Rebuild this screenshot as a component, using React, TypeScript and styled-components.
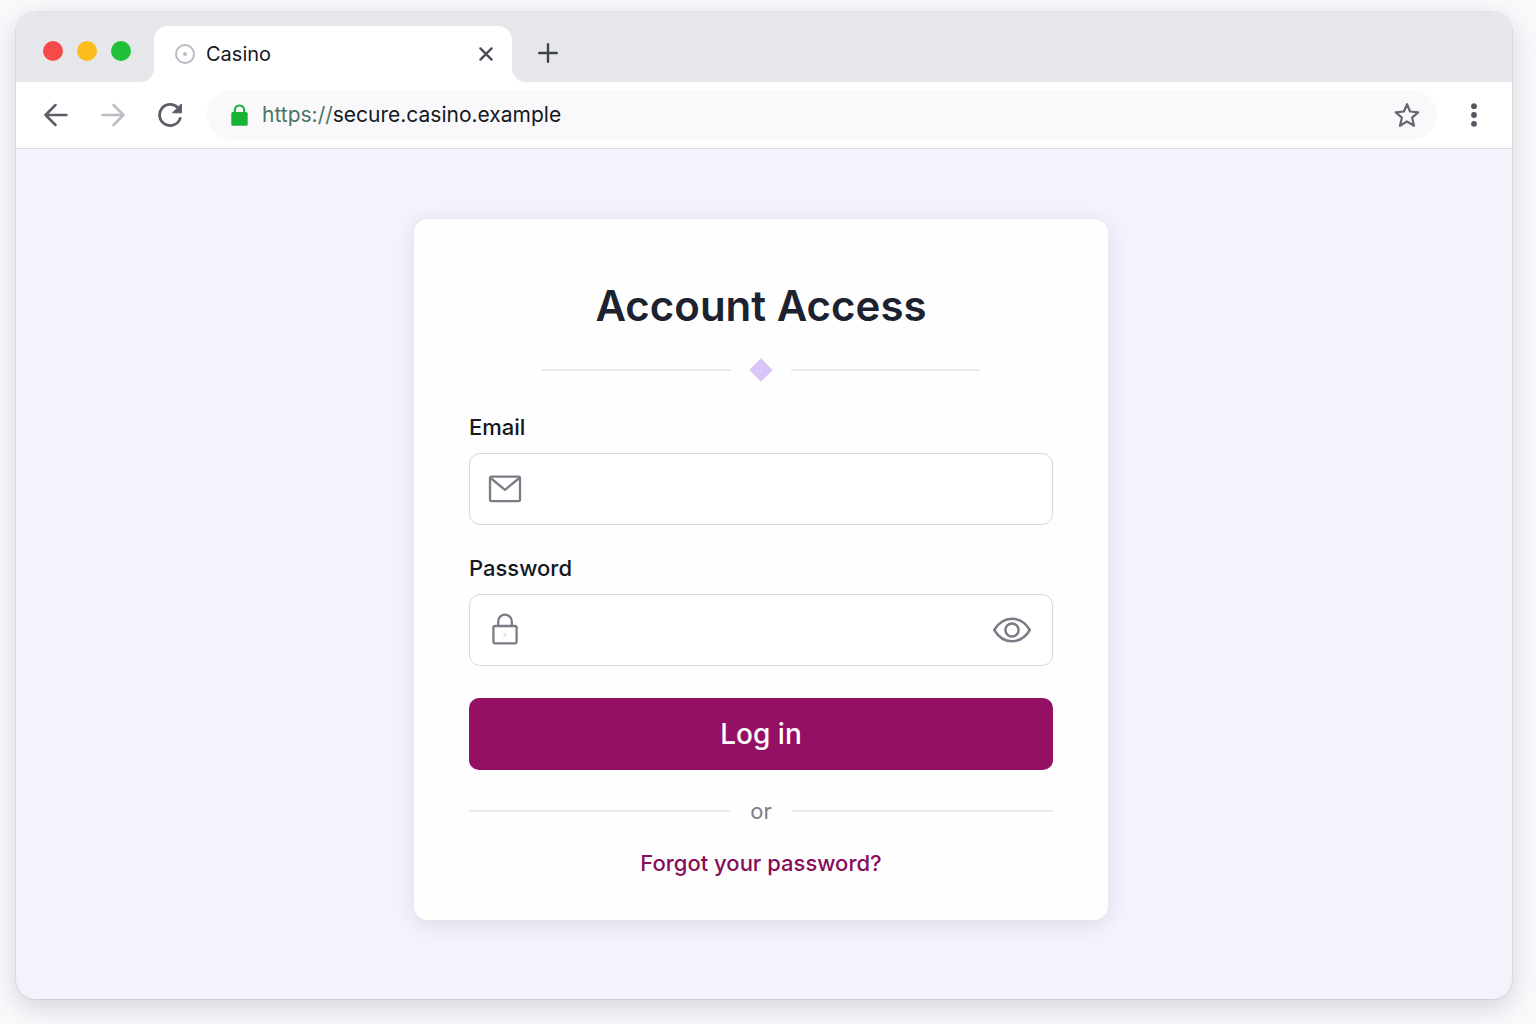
import React, { useState } from "react";
import styled, { createGlobalStyle } from "styled-components";

const GlobalStyle = createGlobalStyle`
  *, *::before, *::after { box-sizing: border-box; }
  body {
    margin: 0;
    background: #f9f9fc;
    color: #15181f;
    font-family: Inter, "Liberation Sans", sans-serif;
    -webkit-font-smoothing: antialiased;
  }
`;

const Desktop = styled.div`
  display: flex;
  min-height: 100vh;
  padding: 12px 24px 25px 16px;
`;

const BrowserWindow = styled.div`
  flex: 1;
  min-width: 0;
  display: flex;
  flex-direction: column;
  overflow: hidden;
  border-radius: 20px;
  background: #f5f2fc;
  box-shadow: 0 0 0 1px rgba(40, 40, 60, 0.08), 0 8px 24px rgba(30, 30, 50, 0.17);
`;

const TabStrip = styled.div`
  display: flex;
  height: 70px;
  background: #ffffff;
`;

const WindowControls = styled.div`
  display: flex;
  align-items: center;
  gap: 14px;
  width: 138px;
  padding: 8px 0 0 27px;
  background: #e6e7eb;
  border-bottom-right-radius: 14px;
`;

const WindowDot = styled.button<{ $color: string }>`
  width: 20px;
  height: 20px;
  padding: 0;
  border: 0;
  border-radius: 50%;
  background: ${(p) => p.$color};
`;

const TabSlot = styled.div`
  display: flex;
  width: 358px;
  padding-top: 14px;
  background: #e6e7eb;
`;

const Tab = styled.div`
  flex: 1;
  display: flex;
  align-items: center;
  gap: 10px;
  padding: 0 12px 0 20px;
  border-radius: 14px 14px 0 0;
  background: #ffffff;
`;

const TabTitle = styled.span`
  flex: 1;
  font-size: 20px;
  line-height: 28px;
`;

const StripRest = styled.div`
  flex: 1;
  display: flex;
  align-items: center;
  padding: 12px 0 0 20px;
  background: #e6e7eb;
  border-bottom-left-radius: 14px;
`;

const IconButton = styled.button<{ $size?: number }>`
  display: flex;
  flex: none;
  align-items: center;
  justify-content: center;
  width: ${(p) => p.$size ?? 40}px;
  height: ${(p) => p.$size ?? 40}px;
  padding: 0;
  border: 0;
  background: transparent;
`;

const Toolbar = styled.div`
  display: flex;
  align-items: center;
  gap: 17px;
  height: 67px;
  padding: 0 18px 0 20px;
  background: #ffffff;
  border-bottom: 1px solid #dcdbe3;
`;

const AddressBar = styled.div`
  flex: 1;
  display: flex;
  align-items: center;
  height: 50px;
  padding: 0 10px 0 24px;
  border-radius: 25px;
  background: #f9f9fb;
`;

const Address = styled.span`
  flex: 1;
  margin-left: 14px;
  font-size: 21px;
  line-height: 28px;
`;

const Scheme = styled.span`
  color: #4a7564;
`;

const Page = styled.main`
  flex: 1;
  display: flex;
  align-items: flex-start;
  justify-content: center;
  padding: 70px 30px 78px 24px;
`;

const Card = styled.form`
  display: flex;
  flex-direction: column;
  width: 100%;
  max-width: 694px;
  padding: 59px 55px 43px;
  border-radius: 14px;
  background: #fefefe;
  box-shadow: 0 4px 20px rgba(60, 50, 100, 0.12);
`;

const Title = styled.h1`
  margin: 0;
  color: #1c2230;
  font-size: 42px;
  font-weight: 600;
  line-height: 56px;
  text-align: center;
`;

const Divider = styled.div<{ $inset?: number; $gap: number; $top: number }>`
  display: flex;
  align-items: center;
  gap: ${(p) => p.$gap}px;
  margin-top: ${(p) => p.$top}px;
  padding: 0 ${(p) => p.$inset ?? 0}px;
  color: #7c7f87;
  font-size: 22px;
  line-height: 28px;

  &::before,
  &::after {
    content: "";
    flex: 1;
    height: 2px;
    background: #e9e9ee;
  }
`;

const Label = styled.label<{ $top: number }>`
  margin: ${(p) => p.$top}px 0 12px;
  font-size: 22px;
  font-weight: 500;
  line-height: 28px;
`;

const Field = styled.div`
  display: flex;
  align-items: center;
  height: 72px;
  padding: 0 20px 0 18px;
  border: 1px solid #d7d8dd;
  border-radius: 11px;
  background: #ffffff;
`;

const Input = styled.input`
  flex: 1;
  min-width: 0;
  height: 100%;
  margin: 0 16px;
  padding: 0;
  border: 0;
  outline: 0;
  background: transparent;
  color: inherit;
  font: inherit;
  font-size: 22px;
`;

const SubmitButton = styled.button`
  height: 72px;
  margin-top: 32px;
  border: 0;
  border-radius: 10px;
  background: #941065;
  color: #ffffff;
  font-family: inherit;
  font-size: 28px;
  font-weight: 500;
  line-height: 36px;
`;

const ForgotLink = styled.a`
  align-self: center;
  margin-top: 24px;
  color: #860d5a;
  font-size: 22px;
  font-weight: 500;
  line-height: 28px;
  text-decoration: none;
`;

const SiteIcon = () => (
  <svg width="22" height="22" viewBox="0 0 22 22" fill="none" aria-hidden="true">
    <circle cx="11" cy="11" r="9" stroke="#b9bac3" strokeWidth="2" />
    <circle cx="11" cy="11" r="2" fill="#b9bac3" />
  </svg>
);

const CloseIcon = () => (
  <svg width="16" height="16" viewBox="0 0 16 16" fill="none" stroke="#4c4e58" strokeWidth="2.4" strokeLinecap="round" aria-hidden="true">
    <path d="M2.4 2.4 13.6 13.6M13.6 2.4 2.4 13.6" />
  </svg>
);

const PlusIcon = () => (
  <svg width="20" height="20" viewBox="0 0 20 20" fill="none" stroke="#40424b" strokeWidth="2.4" strokeLinecap="round" aria-hidden="true">
    <path d="M10 1.2v17.6M1.2 10h17.6" />
  </svg>
);

const ArrowIcon = ({ forward = false }: { forward?: boolean }) => (
  <svg width="24" height="24" viewBox="0 0 24 24" fill="none" stroke={forward ? "#bcbdc4" : "#5b5d68"} strokeWidth="2.5" strokeLinecap="round" strokeLinejoin="round" aria-hidden="true">
    <path d={forward ? "M1.5 12h21M12.5 2l10 10-10 10" : "M22.5 12h-21M11.5 2l-10 10 10 10"} />
  </svg>
);

const ReloadIcon = () => (
  <svg width="26" height="26" viewBox="0 0 26 26" fill="none" aria-hidden="true">
    <path d="M23.2 16.4A10.6 10.6 0 1 1 20.8 5.6" stroke="#5b5d68" strokeWidth="2.8" strokeLinecap="round" />
    <path d="M24.4 2v8.8h-8.8z" fill="#5b5d68" stroke="#5b5d68" strokeWidth="1" strokeLinejoin="round" />
  </svg>
);

const SecureIcon = () => (
  <svg width="17" height="24" viewBox="0 0 17 24" fill="none" aria-hidden="true">
    <path d="M3.8 11V7.2a4.7 4.7 0 0 1 9.4 0V11" stroke="#18b333" strokeWidth="2.2" />
    <rect x="0.3" y="9" width="16.4" height="13.8" rx="1.6" fill="#18b333" />
  </svg>
);

const StarIcon = () => (
  <svg width="28" height="28" viewBox="0 0 28 28" fill="none" stroke="#666871" strokeWidth="2.2" strokeLinejoin="round" aria-hidden="true">
    <path d="M14 3.2 17.1 10.5 25.2 11.3 19.1 16.6 21 24.8 14 20.5 7 24.8 8.9 16.6 2.8 11.3 10.9 10.5Z" />
  </svg>
);

const MenuIcon = () => (
  <svg width="8" height="26" viewBox="0 0 8 26" fill="#555761" aria-hidden="true">
    <circle cx="4" cy="4.2" r="2.9" />
    <circle cx="4" cy="13" r="2.9" />
    <circle cx="4" cy="21.8" r="2.9" />
  </svg>
);

const DiamondIcon = () => (
  <svg width="24" height="24" viewBox="0 0 24 24" aria-hidden="true">
    <path d="M12 0.3 23.7 12 12 23.7 0.3 12Z" fill="#dac5f8" />
  </svg>
);

const MailIcon = () => (
  <svg width="34" height="30" viewBox="0 0 34 30" fill="none" stroke="#7b7d86" strokeWidth="2.3" strokeLinejoin="round" aria-hidden="true">
    <rect x="2" y="2.6" width="30" height="24.6" rx="1.6" />
    <path d="M2.6 4 17 15.8 31.4 4" />
  </svg>
);

const LockIcon = () => (
  <svg width="34" height="34" viewBox="0 0 34 34" fill="none" stroke="#7b7d86" strokeWidth="2.3" aria-hidden="true">
    <path d="M10.2 13V8.4a6.8 6.8 0 0 1 13.6 0V13" />
    <rect x="5.4" y="13" width="23.2" height="17.4" rx="1.8" />
    <circle cx="17" cy="21.7" r="1.8" fill="#e3e3e8" stroke="none" />
  </svg>
);

const EyeIcon = () => (
  <svg width="40" height="28" viewBox="0 0 40 28" fill="none" stroke="#7b7d86" strokeWidth="2.5" strokeLinejoin="round" aria-hidden="true">
    <path d="M2.2 14C6.6 6.6 12.6 2.8 20 2.8S33.4 6.6 37.8 14C33.4 21.4 27.4 25.2 20 25.2S6.6 21.4 2.2 14Z" />
    <circle cx="20" cy="14" r="6.6" />
  </svg>
);

const windowButtons = [
  { name: "Close window", color: "#f6494a" },
  { name: "Minimize window", color: "#fbbd1d" },
  { name: "Maximize window", color: "#22c038" },
];

export default function App() {
  const [visible, setVisible] = useState(false);

  return (
    <>
      <GlobalStyle />
      <Desktop>
        <BrowserWindow>
          <TabStrip>
            <WindowControls>
              {windowButtons.map((b) => (
                <WindowDot key={b.name} type="button" $color={b.color} aria-label={b.name} />
              ))}
            </WindowControls>
            <TabSlot>
              <Tab>
                <SiteIcon />
                <TabTitle>Casino</TabTitle>
                <IconButton type="button" $size={28} aria-label="Close tab">
                  <CloseIcon />
                </IconButton>
              </Tab>
            </TabSlot>
            <StripRest>
              <IconButton type="button" $size={32} aria-label="New tab">
                <PlusIcon />
              </IconButton>
            </StripRest>
          </TabStrip>

          <Toolbar>
            <IconButton type="button" aria-label="Back">
              <ArrowIcon />
            </IconButton>
            <IconButton type="button" aria-label="Forward">
              <ArrowIcon forward />
            </IconButton>
            <IconButton type="button" aria-label="Reload">
              <ReloadIcon />
            </IconButton>
            <AddressBar>
              <SecureIcon />
              <Address>
                <Scheme>https://</Scheme>secure.casino.example
              </Address>
              <IconButton type="button" aria-label="Bookmark this page">
                <StarIcon />
              </IconButton>
            </AddressBar>
            <IconButton type="button" aria-label="Menu">
              <MenuIcon />
            </IconButton>
          </Toolbar>

          <Page>
            <Card onSubmit={(e: React.FormEvent) => e.preventDefault()}>
              <Title>Account Access</Title>
              <Divider $inset={73} $gap={18} $top={24}>
                <DiamondIcon />
              </Divider>

              <Label htmlFor="email" $top={31}>Email</Label>
              <Field>
                <MailIcon />
                <Input id="email" type="email" autoComplete="email" />
              </Field>

              <Label htmlFor="password" $top={29}>Password</Label>
              <Field>
                <LockIcon />
                <Input id="password" type={visible ? "text" : "password"} autoComplete="current-password" />
                <IconButton type="button" aria-label="Show password" aria-pressed={visible} onClick={() => setVisible(!visible)}>
                  <EyeIcon />
                </IconButton>
              </Field>

              <SubmitButton type="submit">Log in</SubmitButton>
              <Divider $gap={20} $top={27}>or</Divider>
              <ForgotLink href="#forgot">Forgot your password?</ForgotLink>
            </Card>
          </Page>
        </BrowserWindow>
      </Desktop>
    </>
  );
}
